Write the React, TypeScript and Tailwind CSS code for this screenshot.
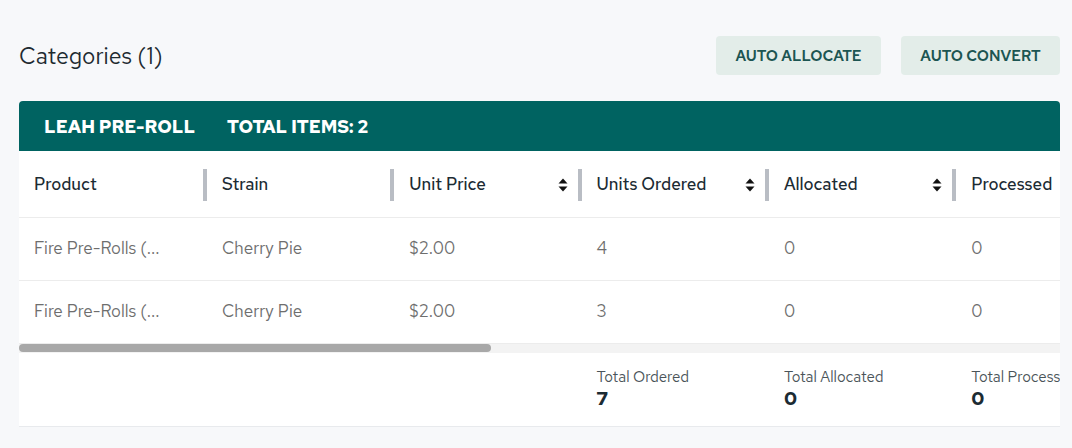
import React from "react";

const font = { fontFamily: '"Red Hat Text", Lato, "Open Sans", sans-serif' };

const columns = [
  { key: "product", label: "Product", sortable: false, w: "w-[184px]" },
  { key: "strain", label: "Strain", sortable: false, w: "w-[187.3px]" },
  { key: "price", label: "Unit Price", sortable: true, w: "w-[187.3px]" },
  { key: "ordered", label: "Units Ordered", sortable: true, w: "w-[187.3px]" },
  { key: "allocated", label: "Allocated", sortable: true, w: "w-[187.3px]" },
  { key: "processed", label: "Processed", sortable: true, w: "w-[187.3px]" },
];

const rows = [
  { product: "Fire Pre-Rolls (...", strain: "Cherry Pie", price: "$2.00", ordered: "4", allocated: "0", processed: "0" },
  { product: "Fire Pre-Rolls (...", strain: "Cherry Pie", price: "$2.00", ordered: "3", allocated: "0", processed: "0" },
];

const totals: Record<string, { label: string; value: string }> = {
  ordered: { label: "Total Ordered", value: "7" },
  allocated: { label: "Total Allocated", value: "0" },
  processed: { label: "Total Processed", value: "0" },
};

function SortIcon() {
  return (
    <svg width="10" height="16" viewBox="0 0 10 16" className="shrink-0">
      <path d="M5 1.5 L9.5 6.5 H0.5 Z" fill="#111" />
      <path d="M5 14.5 L9.5 9.5 H0.5 Z" fill="#111" />
    </svg>
  );
}

export default function App() {
  return (
    <div className="min-h-[448px] w-[1072px] bg-[#f7f8fa] pl-[19px] pr-[12px] pt-[36px]" style={font}>
      <div className="flex items-center justify-between">
        <h1 className="pt-[2px] text-[23px] leading-none text-[#1d2a30]">Categories (1)</h1>
        <div className="flex gap-[20px]">
          <button className="h-[39px] w-[165px] rounded-[4px] bg-[#e3ede9] pt-[2px] text-[15px] font-semibold text-[#1c5552]">
            AUTO ALLOCATE
          </button>
          <button className="h-[39px] w-[159px] rounded-[4px] bg-[#e3ede9] pt-[2px] text-[15px] font-semibold text-[#1c5552]">
            AUTO CONVERT
          </button>
        </div>
      </div>

      <div className="mt-[26px] w-[1041px]">
        <div className="flex h-[50px] items-center gap-[32px] rounded-t-[4px] bg-[#006361] pl-[25px] text-[18px] font-bold text-white">
          <span>LEAH PRE-ROLL</span>
          <span>TOTAL ITEMS: 2</span>
        </div>

        <div className="overflow-hidden bg-white">
          <div className="flex h-[67px] w-[1125px] border-b border-[#ececec] pt-[1px]">
            {columns.map((c, i) => (
              <div key={c.key} className={`flex ${c.w} shrink-0 items-center`}>
                {i > 0 && <div className="h-[32px] w-[4px] shrink-0 bg-[#b9bdc4]" />}
                <div className="flex flex-1 items-center justify-between pl-[15px] pr-[10px]">
                  <span className="text-[17px] font-medium text-[#1c2b33]">{c.label}</span>
                  {c.sortable && <SortIcon />}
                </div>
              </div>
            ))}
          </div>
          {rows.map((r, ri) => (
            <div key={ri} className="flex h-[63px] w-[1125px] items-center border-b border-[#ececec]">
              {columns.map((c, i) => (
                <div key={c.key} className={`${c.w} shrink-0 text-[17px] text-[#6e6e6e] ${i > 0 ? "pl-[19px]" : "pl-[15px]"}`}>
                  {(r as Record<string, string>)[c.key]}
                </div>
              ))}
            </div>
          ))}
          <div className="h-[9px] bg-[#f3f3f3]">
            <div className="h-[8px] w-[472px] rounded-full bg-[#a8a8a8]" />
          </div>
          <div className="flex h-[74px] w-[1125px] items-center border-b border-[#e8eaed]">
            {columns.map((c, i) => (
              <div key={c.key} className={`${c.w} shrink-0 overflow-hidden whitespace-nowrap ${i > 0 ? "pl-[19px]" : "pl-[15px]"}`}>
                {totals[c.key] && (
                  <div className="flex flex-col">
                    <span className="text-[15px] leading-[18px] text-[#4a5459]">{totals[c.key].label}</span>
                    <span className="text-[19px] font-bold leading-[26px] text-[#1c2b33]">{totals[c.key].value}</span>
                  </div>
                )}
              </div>
            ))}
          </div>
        </div>
      </div>
    </div>
  );
}
